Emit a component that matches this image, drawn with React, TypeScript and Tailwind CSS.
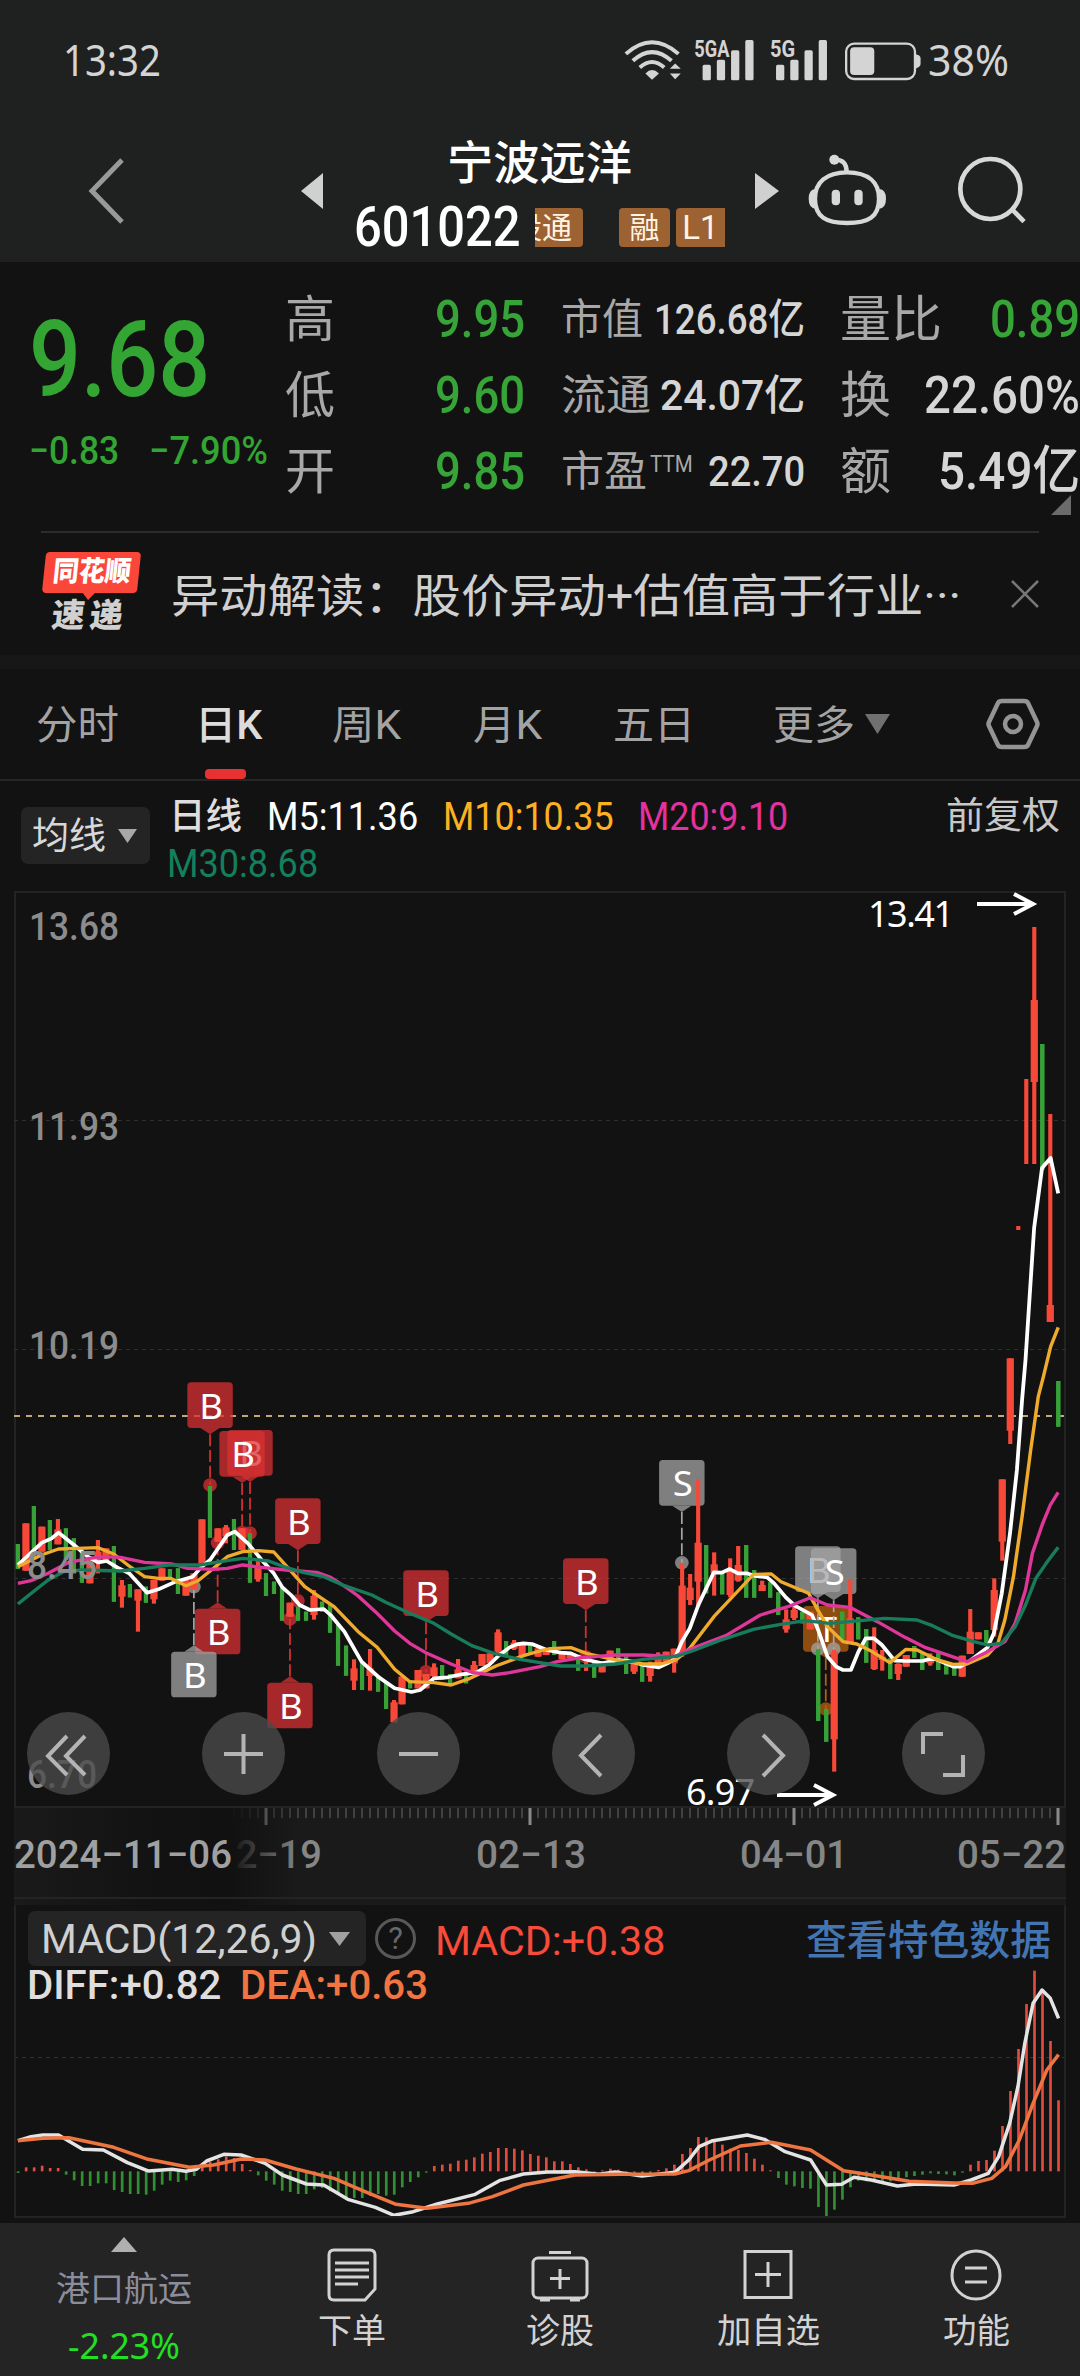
import { useLayoutEffect, useRef, useState } from "react";
import type { ReactNode } from "react";

const DIN = "font-['Roboto','Noto_Sans_CJK_SC',sans-serif]";
const UI = "font-['Noto_Sans','Noto_Sans_CJK_SC',sans-serif]";

// Squeezes a line of text to a fixed width, the way the condensed quote font does
function Fit({ w, className = "", children }: { w: number; className?: string; children: ReactNode }) {
  const ref = useRef<HTMLSpanElement>(null);
  const [scale, setScale] = useState(1);
  useLayoutEffect(() => {
    if (ref.current) setScale(w / ref.current.offsetWidth);
  }, [w, children]);
  return (
    <span className={`block shrink-0 whitespace-nowrap leading-none ${className}`} style={{ width: w }}>
      <span ref={ref} className="inline-block w-max origin-left" style={{ transform: `scaleX(${scale})` }}>
        {children}
      </span>
    </span>
  );
}

function Triangle({ className = "" }: { className?: string }) {
  return (
    <svg viewBox="0 0 20 14" preserveAspectRatio="none" className={`shrink-0 ${className}`} fill="currentColor">
      <path d="M0 0H20L10 14Z" />
    </svg>
  );
}

function StatusBar() {
  return (
    <div className={`flex h-[118px] items-center pl-[63px] text-[#d4d4d4] ${UI}`}>
      <Fit w={98} className="text-[43px]">13:32</Fit>
      <svg viewBox="60 50 960 130" className="ml-[460px] h-[43px] w-[320px] shrink-0 overflow-visible" fill="currentColor">
        <g fill="none" stroke="currentColor" strokeWidth="12">
          <path d="M71 98Q150 28 230 98" />
          <path d="M92 119Q150 66 209 119" />
          <path d="M113 139Q150 106 187 139" />
        </g>
        <path d="M130 157Q150 136 171 157L150 176Z" />
        <path d="M204 143L220 127L237 143ZM204 157H237L220 175Z" />
        <text x="278" y="106" fontSize="73" fontWeight="700" fontFamily="Roboto" textLength="106" lengthAdjust="spacingAndGlyphs">5GA</text>
        <rect x="303" y="131" width="25" height="47" rx="5" />
        <rect x="346" y="116" width="25" height="62" rx="5" />
        <rect x="389" y="87" width="25" height="91" rx="5" />
        <rect x="432" y="56" width="25" height="122" rx="5" />
        <text x="507" y="106" fontSize="73" fontWeight="700" fontFamily="Roboto" textLength="76" lengthAdjust="spacingAndGlyphs">5G</text>
        <rect x="525" y="131" width="25" height="47" rx="5" />
        <rect x="568" y="116" width="25" height="62" rx="5" />
        <rect x="611" y="87" width="25" height="91" rx="5" />
        <rect x="654" y="56" width="25" height="122" rx="5" />
        <rect x="737" y="67" width="208" height="107" rx="24" fill="none" stroke="currentColor" strokeWidth="7" />
        <rect x="749" y="78" width="73" height="84" rx="12" />
        <path d="M948 99Q962 102 962 112V128Q962 138 948 142Z" />
      </svg>
      <Fit w={81} className="-ml-[13px] text-[43px]">38%</Fit>
    </div>
  );
}

function NavBar() {
  return (
    <div className="flex h-[144px] items-start pl-[88px]">
      <svg viewBox="0 0 38 66" className="mt-[40px] h-[66px] w-[38px]" fill="none" stroke="#999" strokeWidth="5">
        <path d="M34 2L4 33L34 64" />
      </svg>
      <svg viewBox="0 0 22 36" className="mt-[55px] ml-[175px] h-[36px] w-[22px]" fill="#d0d0d0">
        <path d="M22 0V36L0 18Z" />
      </svg>
      <div className="ml-[31px] w-[371px] text-white">
        <div className="flex h-[90px] items-center pl-[93px]">
          <Fit w={185} className={`text-[46px] font-medium ${DIN}`}>宁波远洋</Fit>
        </div>
        <div className="flex h-[38px] items-center">
          <Fit w={167} className={`text-[55px] font-medium ${DIN}`}>601022</Fit>
          <div className={`ml-[14px] flex h-[39px] w-[190px] justify-end overflow-hidden text-[30px] leading-[39px] text-[#fff4e4] ${DIN}`}>
            <span className="shrink-0 rounded-[4px] bg-[#9d6232] px-[11px] whitespace-nowrap">沪股通</span>
            <span className="ml-[36px] w-[51px] shrink-0 rounded-[4px] bg-[#9d6232] text-center">融</span>
            <span className="ml-[6px] w-[49px] shrink-0 rounded-l-[4px] bg-[#9d6232] text-center text-[33px]">L1</span>
          </div>
        </div>
      </div>
      <svg viewBox="0 0 24 36" className="mt-[55px] ml-[30px] h-[36px] w-[24px]" fill="#d0d0d0">
        <path d="M0 0V36L24 18Z" />
      </svg>
      <svg viewBox="622 398 243 222" className="mt-[35px] ml-[28px] h-[74px] w-[81px]" fill="none" stroke="#d8d8d8" strokeWidth="13">
        <path d="M742 456C806 456 838 486 838 535C838 590 806 608 742 608C680 608 646 590 646 535C646 486 680 456 742 456Z" />
        <path d="M741 455C741 432 731 418 707 418" />
        <circle cx="704" cy="418" r="15" fill="#d8d8d8" stroke="none" />
        <path d="M647 506Q627 508 627 535Q627 562 647 565ZM839 506Q859 508 859 535Q859 562 839 565Z" fill="#d8d8d8" stroke="none" />
        <rect x="696" y="508" width="25" height="47" rx="12" fill="#d8d8d8" stroke="none" />
        <rect x="764" y="508" width="25" height="47" rx="12" fill="#d8d8d8" stroke="none" />
      </svg>
      <svg viewBox="1070 406 210 210" className="mt-[37px] ml-[69px] h-[70px] w-[70px]" fill="none" stroke="#d8d8d8" strokeWidth="14">
        <circle cx="1170" cy="508" r="90" />
        <path d="M1236 570L1271 606" />
      </svg>
    </div>
  );
}

function Quote() {
  const up = "text-[#37a437]";
  const flat = "text-[#d6d6d6]";
  const rows = [
    { a: "高", av: "9.95", b: "市值", bw: 82, bv: "126.68亿", bvw: 151, c: "量比", cw: 102, cv: "0.89", cvw: 90, cc: up },
    { a: "低", av: "9.60", b: "流通", bw: 90, bv: "24.07亿", bvw: 145, c: "换", cw: 51, cv: "22.60%", cvw: 156, cc: flat },
    { a: "开", av: "9.85", b: "市盈", bw: 86, bv: "22.70", bvw: 97, c: "额", cw: 51, cv: "5.49亿", cvw: 142, cc: flat },
  ];
  return (
    <section className={`relative flex h-[269px] pt-[20px] pl-[29px] ${DIN}`}>
      <div className="w-[256px] shrink-0 pt-[25px] text-[#33a532]">
        <Fit w={181} className="text-[106px] font-medium">9.68</Fit>
        <div className="mt-[19px] flex">
          <Fit w={90} className="text-[39px] font-medium">−0.83</Fit>
          <Fit w={119} className="ml-[30px] text-[39px] font-medium">−7.90%</Fit>
        </div>
      </div>
      <div>
        {rows.map((r) => (
          <div key={r.a} className="flex h-[76px] w-[795px] items-center text-[50px] text-[#a8a8a8]">
            <Fit w={50}>{r.a}</Fit>
            <Fit w={90} className="ml-[100px] text-[52px] font-medium text-[#37a437]">{r.av}</Fit>
            <div className="ml-[36px] flex w-[244px] items-center justify-between text-[42px]">
              <Fit w={r.bw}>{r.b}</Fit>
              {r.b === "市盈" && <Fit w={43} className="-ml-[12px] self-start pt-[2px] text-[23px]">TTM</Fit>}
              <Fit w={r.bvw} className="text-[42px] font-medium text-[#d6d6d6]">{r.bv}</Fit>
            </div>
            <Fit w={r.cw} className="ml-[35px]">{r.c}</Fit>
            <Fit w={r.cvw} className={`ml-auto text-[52px] font-medium ${r.cc}`}>{r.cv}</Fit>
          </div>
        ))}
      </div>
      <svg viewBox="0 0 20 20" className="absolute right-[9px] bottom-[16px] h-[20px] w-[20px]" fill="#6b6b6b">
        <path d="M20 0V20H0Z" />
      </svg>
    </section>
  );
}

function News() {
  return (
    <section className={`mx-[41px] flex h-[124px] border-t-2 border-[#2c2c2c] ${DIN}`}>
      <div className="w-[101px] shrink-0 pt-[19px] pl-[3px]">
        <div className="relative h-[41px] w-[95px] -skew-x-6 rounded-[4px] bg-[#fb4739] pt-[6px] pl-[9px]">
          <Fit w={78} className="text-[28px] font-black text-white">同花顺</Fit>
          <Triangle className="absolute top-[40px] left-[40px] h-[8px] w-[14px] text-[#fb4739]" />
        </div>
        <div className="mt-[6px] ml-[8px] flex -skew-x-6 gap-[5px] text-[33px] font-black text-[#d0d0d0]">
          <Fit w={33}>速</Fit>
          <Fit w={33}>递</Fit>
        </div>
      </div>
      <Fit w={790} className="mt-[40px] ml-[29px] text-[46px] text-[#d0d0d0]">异动解读：股价异动+估值高于行业···</Fit>
      <svg viewBox="0 0 28 28" className="mt-[47px] ml-[50px] h-[28px] w-[28px] shrink-0" stroke="#777" strokeWidth="2.5">
        <path d="M1 1L27 27M27 1L1 27" />
      </svg>
    </section>
  );
}

function Tabs() {
  return (
    <nav className={`flex h-[112px] items-center border-b-2 border-[#272727] pl-[36px] text-[40px] text-[#a3a3a3] ${DIN}`}>
      <Fit w={83} className="pt-[3px]">分时</Fit>
      <div className="relative ml-[76px] text-[#dcdcdc]">
        <Fit w={67} className="pt-[3px] font-medium">日K</Fit>
        <span className="absolute top-[66px] left-[10px] h-[10px] w-[41px] rounded-[4px] bg-[#e83131]" />
      </div>
      <Fit w={69} className="ml-[70px] pt-[3px]">周K</Fit>
      <Fit w={69} className="ml-[72px] pt-[3px]">月K</Fit>
      <Fit w={82} className="ml-[71px] pt-[3px]">五日</Fit>
      <Fit w={82} className="ml-[78px] pt-[3px]">更多</Fit>
      <Triangle className="ml-[10px] h-[20px] w-[25px] text-[#707070]" />
      <svg viewBox="0 0 54 52" className="ml-[96px] h-[52px] w-[54px]" fill="none" stroke="#949494" strokeWidth="4.5" strokeLinejoin="round">
        <path d="M16 3H38Q41 3 42 5L51 24Q52 26 51 28L42 47Q41 49 38 49H16Q13 49 12 47L3 28Q2 26 3 24L12 5Q13 3 16 3Z" />
        <circle cx="27" cy="26" r="8" />
      </svg>
    </nav>
  );
}

function Averages() {
  return (
    <div className={`flex h-[110px] pl-[21px] text-[38px] ${DIN}`}>
      <div className="mt-[26px] flex h-[57px] w-[129px] shrink-0 items-center rounded-[7px] bg-[#242424] pl-[11px] text-[#d8d8d8]">
        <Fit w={74} className="pt-[2px] text-[37px]">均线</Fit>
        <Triangle className="ml-[12px] h-[14px] w-[19px] text-[#a8a8a8]" />
      </div>
      <div className="ml-[17px] w-[755px] pt-[17px]">
        <div className="flex">
          <Fit w={73} className="ml-[2px] pt-[1px] text-[36px] font-medium text-[#dedede]">日线</Fit>
          <Fit w={151} className="ml-[25px] text-white">M5:11.36</Fit>
          <Fit w={171} className="ml-[25px] text-[#fdb022]">M10:10.35</Fit>
          <Fit w={150} className="ml-[24px] text-[#e3329f]">M20:9.10</Fit>
        </div>
        <Fit w={151} className="mt-[9px] text-[#12805c]">M30:8.68</Fit>
      </div>
      <Fit w={114} className="mt-[17px] ml-[24px] text-[37px] text-[#c8c8c8]">前复权</Fit>
    </div>
  );
}

// index, colour, high, low, then body top and bottom when they differ
type Candle = [number, "r" | "g", number, number, number?, number?];
const CANDLES: Candle[] = [
  [0, "g", 552, 627], [1, "r", 490, 632], [2, "g", 438, 590], [3, "r", 500, 575], [4, "g", 480, 570],
  [5, "r", 477, 553, 508, 553], [6, "g", 505, 600], [7, "g", 535, 640], [8, "g", 570, 668], [9, "r", 590, 670],
  [10, "r", 540, 640, 575, 610], [11, "r", 565, 600], [12, "g", 558, 725], [13, "r", 660, 743, 676, 710],
  [14, "g", 672, 712], [15, "r", 688, 815, 688, 722], [16, "g", 680, 728], [17, "r", 660, 731, 660, 718],
  [18, "r", 625, 662], [19, "g", 627, 655], [20, "g", 625, 702], [21, "r", 660, 707], [22, "r", 640, 690],
  [23, "r", 478, 612], [24, "g", 378, 533], [25, "r", 505, 545], [26, "r", 495, 550, 502, 530], [27, "g", 477, 570],
  [28, "r", 505, 570], [29, "g", 520, 668], [30, "r", 603, 665, 620, 658], [31, "g", 640, 708], [32, "g", 665, 702],
  [33, "g", 682, 782], [34, "r", 728, 770], [35, "g", 740, 782], [36, "g", 755, 782], [37, "r", 690, 779, 708, 765],
  [38, "g", 725, 755], [39, "g", 735, 818], [40, "g", 795, 917], [41, "g", 857, 947], [42, "r", 898, 990, 925, 962],
  [43, "g", 905, 990], [44, "r", 867, 992, 925, 948], [45, "g", 945, 995], [46, "g", 965, 1047],
  [47, "r", 1020, 1087, 1027, 1087], [48, "r", 950, 1033], [49, "g", 960, 985], [50, "r", 930, 985], [51, "r", 942, 985],
  [52, "r", 910, 960, 922, 948], [53, "g", 915, 960], [54, "g", 942, 978], [55, "r", 897, 955, 928, 955],
  [56, "g", 935, 970], [57, "r", 903, 940, 915, 935], [58, "r", 882, 918], [59, "r", 880, 910],
  [60, "r", 808, 885, 817, 875], [61, "g", 843, 885], [62, "r", 840, 870, 848, 866], [63, "r", 855, 890],
  [64, "g", 855, 885], [65, "r", 865, 890], [66, "r", 868, 885], [67, "g", 843, 885], [68, "r", 878, 898],
  [69, "r", 880, 895], [70, "g", 885, 932], [71, "r", 893, 933, 895, 900], [72, "g", 900, 953], [73, "r", 903, 937],
  [74, "r", 872, 905], [75, "g", 865, 900], [76, "g", 890, 942], [77, "r", 900, 942, 912, 935], [78, "g", 912, 965],
  [79, "r", 905, 965, 912, 948], [80, "r", 877, 918, 895, 910], [81, "r", 875, 905], [82, "r", 866, 938, 866, 910],
  [83, "r", 610, 890, 677, 885], [84, "r", 642, 735, 683, 720], [85, "r", 357, 740, 548, 665], [86, "g", 555, 700],
  [87, "r", 577, 707, 613, 640], [88, "g", 635, 703], [89, "r", 595, 712, 630, 705], [90, "r", 558, 665, 615, 662],
  [91, "g", 555, 713], [92, "g", 630, 713], [93, "r", 662, 693, 675, 693], [94, "g", 667, 713], [95, "g", 697, 765],
  [96, "r", 748, 818, 778, 808], [97, "r", 740, 780, 750, 774], [98, "g", 755, 790], [99, "r", 755, 808],
  [100, "g", 868, 1083], [101, "g", 1047, 1145], [102, "r", 870, 1235, 877, 1138], [103, "g", 755, 840],
  [104, "r", 657, 852, 775, 852], [105, "g", 772, 838], [106, "g", 807, 908], [107, "r", 802, 930, 870, 927],
  [108, "r", 870, 932, 890, 900], [109, "g", 895, 957], [110, "r", 910, 960, 912, 942], [111, "r", 885, 920],
  [112, "g", 858, 893], [113, "g", 880, 930], [114, "r", 880, 917, 890, 910], [115, "g", 880, 930], [116, "g", 905, 943],
  [117, "g", 912, 947], [118, "r", 887, 950], [119, "r", 747, 882, 815, 882], [120, "r", 817, 838], [121, "g", 810, 850],
  [122, "r", 655, 830, 690, 810], [123, "r", 358, 602, 358, 545], [124, "r", -5, 252, -5, 212],
  [125, "r", -402, -390, -396, -396], [126, "r", -843, -588, -700, -700], [127, "r", -1299, -588, -1080, -834],
  [128, "g", -948, -570], [129, "r", -738, -114, -165, -114], [130, "g", 63, 200],
];

const MA5 =
  "52,615 122,548 150,535 170,518 215,555 255,590 285,607 310,603 340,622 375,640 427,698 460,688 510,665 560,650 586,620 610,600 640,555 660,525 682,515 720,550 760,600 795,640 820,682 845,705 870,735 900,750 940,747 960,765 1000,815 1050,905 1098,950 1146,985 1170,990 1195,996 1220,990 1260,955 1300,952 1340,943 1385,937 1420,915 1450,885 1480,862 1500,853 1520,850 1545,852 1588,870 1628,878 1658,880 1698,898 1748,910 1798,900 1838,905 1868,915 1913,922 1938,910 1958,898 1980,845 2003,805 2028,735 2073,637 2096,638 2119,627 2143,640 2168,640 2193,648 2228,652 2248,670 2282,712 2308,737 2358,765 2376,810 2403,890 2428,920 2448,930 2471,930 2493,875 2514,835 2538,835 2561,855 2598,902 2628,903 2678,903 2700,897 2718,898 2768,920 2788,920 2813,905 2868,862 2886,820 2909,700 2933,520 2953,330 2968,120 2978,0 3003,-396 3026,-576 3051,-606 3073,-500";
const MA10 =
  "52,620 120,585 170,567 225,565 285,563 330,582 375,618 420,650 460,655 495,655 540,677 575,662 620,625 660,590 705,575 750,572 795,576 835,622 885,680 930,712 970,740 1040,815 1095,862 1146,928 1190,965 1260,968 1310,975 1365,955 1440,918 1520,887 1568,873 1598,866 1658,863 1708,882 1788,900 1868,912 1918,912 1963,900 2003,865 2073,770 2143,693 2188,643 2240,642 2268,665 2348,700 2376,752 2403,800 2448,845 2488,852 2528,872 2584,908 2631,868 2663,870 2718,898 2768,913 2808,912 2868,885 2898,850 2918,780 2943,650 2968,470 2993,270 3015,110 3030,50 3051,-40 3073,-98";
const MA20 =
  "52,670 90,662 140,640 200,607 260,595 305,590 350,592 420,607 500,612 545,625 620,628 660,625 705,615 760,622 830,630 920,637 960,652 1010,685 1040,708 1090,755 1146,813 1190,850 1240,880 1310,912 1370,937 1430,945 1480,938 1568,920 1618,905 1688,893 1788,885 1868,885 1958,890 2003,868 2108,827 2208,765 2288,740 2353,713 2403,735 2468,742 2548,785 2628,832 2688,863 2808,905 2868,875 2918,845 2948,790 2978,690 2998,580 3028,490 3050,435 3073,397";
const MA30 =
  "52,732 100,692 140,660 185,635 240,630 350,633 420,625 490,615 580,615 640,605 705,595 780,603 830,622 880,637 940,650 1000,677 1080,705 1120,727 1190,760 1260,790 1310,822 1370,857 1440,882 1510,898 1568,908 1628,918 1698,918 1788,912 1868,898 1968,888 2018,870 2088,842 2188,808 2268,793 2338,782 2408,790 2468,785 2568,775 2663,780 2708,797 2768,827 2828,845 2868,855 2908,850 2948,800 2978,735 3008,655 3038,610 3073,562";

// Trade marks: letter, x, top of the tag, y of the dot
const MARKS = [
  { t: "B", x: 610, y: 67, dot: 375, fill: "#d93032" },
  { t: "B", x: 726, y: 210, dot: 519, fill: "#d93032" },
  { t: "B", x: 703, y: 213, dot: 517, fill: "#d93032" },
  { t: "B", x: 865, y: 415, dot: 722, fill: "#d93032" },
  { t: "B", x: 1237, y: 631, dot: 935, fill: "#d93032" },
  { t: "B", x: 632, y: 746, dot: 548, fill: "#d93032" },
  { t: "B", x: 842, y: 968, dot: 777, fill: "#d93032" },
  { t: "B", x: 563, y: 875, dot: 680, fill: "#a4a4a4" },
  { t: "B", x: 1701, y: 595, dot: 890, fill: "#d93032" },
  { t: "S", x: 1980, y: 300, dot: 608, fill: "#a4a4a4" },
  { t: "T", x: 2398, y: 738, dot: 1047, fill: "#b8600f" },
  { t: "B", x: 2375, y: 559, dot: 867, fill: "#a4a4a4" },
  { t: "S", x: 2421, y: 565, dot: 867, fill: "#a4a4a4" },
];

const RED = "#f84838";
const GREEN = "#37a037";

function Mark({ t, x, y, dot, fill }: (typeof MARKS)[number]) {
  const up = dot < y;
  const edge = up ? y : y + 137;
  const tip = up ? y - 19 : y + 156;
  return (
    <g>
      <g fill={fill} opacity={0.75}>
        <rect x={x - 66} y={y} width={132} height={137} rx={11} />
        <path d={`M${x - 28} ${edge}L${x} ${tip}L${x + 28} ${edge}Z`} />
        <circle cx={x} cy={dot} r={20} />
      </g>
      <line x1={x} x2={x} y1={tip} y2={dot} stroke={fill} strokeWidth={5} strokeDasharray="36 11" />
      <text x={x + 3} y={y + 109} textAnchor="middle" fill="#fff" fontSize={106} fontFamily="Noto Sans">{t}</text>
    </g>
  );
}

function PriceLabel({ x, y, w, children }: { x: number; y: number; w: number; children: string }) {
  return (
    <text x={x} y={y} fill="#8c8c8c" fontSize="39" fontWeight="500" fontFamily="Roboto" textLength={w} lengthAdjust="spacingAndGlyphs">
      {children}
    </text>
  );
}

function CandleChart() {
  return (
    <svg viewBox="0 891 1080 917" className="block h-[917px] w-[1080px]" fill="none">
      <rect x="15" y="892" width="1050" height="915" stroke="#232323" strokeWidth="2" />
      <g stroke="#303030" strokeWidth="1" strokeDasharray="4 4">
        <path d="M14 1120.5H1066M14 1349.5H1066M14 1578.5H1066" />
      </g>
      <path d="M14 1416H1066" stroke="#c6a876" strokeWidth="2" strokeDasharray="6 6" />
      <g transform="translate(0 1360) scale(0.34436 0.33333)">
        {MARKS.map((m) => (
          <Mark key={`${m.x}`} {...m} />
        ))}
        {CANDLES.map(([i, c, high, low, top = high, bottom = low]) => {
          const x = 52 + 23.24 * i;
          const half = c === "r" ? 10.5 : 6;
          return (
            <g key={i} fill={c === "r" ? RED : GREEN}>
              <rect x={x - 6} y={high} width={12} height={low - high} />
              <rect x={x - half} y={top} width={half * 2} height={bottom - top} />
            </g>
          );
        })}
        <g strokeWidth="10" strokeLinejoin="round">
          <polyline points={MA5} stroke="#ffffff" strokeWidth="11" />
          <polyline points={MA10} stroke="#f0ab2c" />
          <polyline points={MA20} stroke="#df3799" />
          <polyline points={MA30} stroke="#187c5c" />
        </g>
      </g>
      <PriceLabel x={29} y={940} w={90}>13.68</PriceLabel>
      <PriceLabel x={29} y={1140} w={90}>11.93</PriceLabel>
      <PriceLabel x={29} y={1359} w={90}>10.19</PriceLabel>
      <PriceLabel x={27} y={1579} w={70}>8.45</PriceLabel>
      <PriceLabel x={27} y={1788} w={70}>6.70</PriceLabel>
      <g fill="#fff" fontSize="36" fontFamily="Noto Sans">
        <text x="868" y="927" textLength="86">13.41</text>
        <text x="686" y="1805" textLength="69">6.97</text>
      </g>
      <g stroke="#fff" strokeWidth="4">
        <path d="M977 904H1033M1014 894L1033 904L1014 914" />
        <path d="M777 1795H833M814 1785L833 1795L814 1805" />
      </g>
    </svg>
  );
}

const CONTROLS = ["M33 24L14 44L33 63M51 24L32 44L51 63", "M22 42H61M41.5 22V62", "M22 42H61", "M49 23L29 43.500L49 64", "M36 23L56 43.500L36 64", "M21 42V22H41M61 43V63H41"];

function Controls() {
  return (
    <div className="absolute bottom-[13px] left-[27px] flex gap-[92px]">
      {CONTROLS.map((d, i) => (
        <button key={i} className="h-[83px] w-[83px] rounded-full bg-[#4a4a4a]/78">
          <svg viewBox={i === 0 ? "-7 0 83 83" : "0 0 83 83"} className="h-[83px] w-[83px]" fill="none" stroke="#b4b4b4" strokeWidth="4">
            <path d={d} />
          </svg>
        </button>
      ))}
    </div>
  );
}

function DateAxis() {
  const ticks = Array.from({ length: 104 }, (_, k) => k + 27);
  return (
    <svg viewBox="0 1808 1080 97" className="block h-[97px] w-[1080px]">
      <defs>
        <linearGradient id="fade">
          <stop offset="0" stopColor="#1a1a1a" />
          <stop offset="0.5" stopColor="#121212" />
          <stop offset="0.75" stopColor="#111" />
          <stop offset="1" stopColor="#111" stopOpacity="0" />
        </linearGradient>
      </defs>
      <rect x="14" y="1808" width="1052" height="97" fill="#1a1a1a" />
      {ticks.map((i) => {
        const major = (i - 31) % 33 === 0;
        return <rect key={i} x={major ? 16.5 + 8 * i : 17.5 + 8 * i} y="1808" width={major ? 3 : 1} height={major ? 17 : 10} fill={major ? "#8a8a8a" : "#666"} />;
      })}
      <g fill="#868686" fontSize="39" fontWeight="500" fontFamily="Roboto">
        <text x="214" y="1868" textLength="108" lengthAdjust="spacingAndGlyphs">12−19</text>
        <text x="476" y="1868" textLength="110" lengthAdjust="spacingAndGlyphs">02−13</text>
        <text x="740" y="1868" textLength="108" lengthAdjust="spacingAndGlyphs">04−01</text>
        <text x="957" y="1868" textLength="109" lengthAdjust="spacingAndGlyphs">05−22</text>
        <rect x="14" y="1808" width="286" height="97" fill="url(#fade)" />
        <text x="14" y="1868" fill="#a0a0a0" textLength="218" lengthAdjust="spacingAndGlyphs">2024−11−06</text>
      </g>
      <rect x="14" y="1897" width="1052" height="2" fill="#242424" />
    </svg>
  );
}

const BARS = [
  -5, 12, 12, 17, 10, 10, -10, -27, -44, -44, -36, -36, -56, -62, -68, -68, -70, -58, -40, -28, -32, -27, -14, 20, 28, 36, 44, 40, 22, 4,
  -12, -28, -40, -58, -62, -68, -68, -54, -50, -60, -70, -82, -80, -80, -74, -68, -73, -70, -48, -32, -18, -4, 16, 20, 23, 32, 35, 42, 53, 58,
  70, 70, 68, 63, 52, 47, 42, 30, 30, 22, 12, 6, -3, 3, 8, 5, -4, -5, -6, -5, 4, 9, 20, 52, 70, 103, 102, 92, 80, 68, 64, 55, 38, 20, 3, -20,
  -40, -45, -50, -52, -107, -137, -115, -85, -48, -28, -30, -30, -32, -30, -28, -18, -14, -10, -6, -8, -9, -12, -4, 20, 31, 34, 62, 136, 241,
  367, 502, 602, 535, 391, 213,
];
const DIFF =
  "26,542 45,530 62,525 85,525 120,568 150,570 185,608 215,633 250,628 270,634 285,628 300,603 325,583 350,585 385,610 410,645 445,672 470,675 505,718 545,742 572,766 600,755 635,732 690,703 725,662 760,642 795,636 835,635 870,643 893,636 932,648 980,637 1000,600 1015,560 1035,542 1085,525 1110,538 1140,575 1177,600 1200,675 1222,673 1240,652 1265,660 1303,678 1330,672 1385,675 1410,660 1435,640 1450,590 1466,490 1478,380 1488,250 1500,130 1513,90 1525,115 1537,175";
const DEA =
  "26,542 62,535 100,533 165,562 215,598 275,622 310,615 350,597 385,600 430,627 485,655 530,695 575,733 620,745 680,730 715,710 760,675 835,645 900,643 980,642 1000,632 1030,600 1075,558 1120,547 1177,570 1225,632 1265,645 1320,664 1385,669 1412,670 1440,655 1460,620 1480,540 1500,430 1520,330 1537,284";

function Macd() {
  return (
    <section className={`relative mx-[14px] h-[313px] border-x-2 border-b-2 border-[#232323] ${DIN}`}>
      <svg viewBox="16 1905 1048 311" className="absolute inset-0 h-[311px] w-[1048px]" fill="none">
        <path d="M14 2057.500H1066" stroke="#333" strokeDasharray="4 4" />
        <g transform="translate(0 1960) scale(0.68871 0.33333)">
          {BARS.map((v, i) => (
            <rect key={i} x={24.4 + 11.62 * i} y={v > 0 ? 634 - v : 634} width={3.9} height={Math.abs(v)} fill={v > 0 ? "#e14c3c" : "#318f30"} />
          ))}
          <polyline points={DIFF} stroke="#e4e4e4" strokeWidth="3.500" vectorEffect="non-scaling-stroke" strokeLinejoin="round" />
          <polyline points={DEA} stroke="#ee7440" strokeWidth="3.500" vectorEffect="non-scaling-stroke" strokeLinejoin="round" />
        </g>
      </svg>
      <div className="relative flex pt-[6px] pl-[12px] text-[41px]">
        <div className="flex h-[55px] w-[338px] items-center rounded-[7px] bg-[#242424] pl-[13px] text-[#d0d0d0]">
          <Fit w={276} className="pt-[2px]">MACD(12,26,9)</Fit>
          <Triangle className="ml-[12px] h-[14px] w-[21px] text-[#a0a0a0]" />
        </div>
        <span className="mt-[7px] ml-[9px] h-[41px] w-[41px] rounded-full border-[3px] border-[#585858] text-center text-[31px] leading-[36px] text-[#686868]">?</span>
        <Fit w={230} className="mt-[10px] ml-[19px] text-[#f84b3a]">MACD:+0.38</Fit>
        <Fit w={245} className="mt-[10px] ml-[141px] font-medium text-[#4275b2]">查看特色数据</Fit>
      </div>
      <div className="relative -mt-px flex pl-[11px] text-[41px]">
        <Fit w={194} className="font-medium text-[#dedede]">DIFF:+0.82</Fit>
        <Fit w={188} className="ml-[19px] font-medium text-[#f27440]">DEA:+0.63</Fit>
      </div>
    </section>
  );
}

function NavItem({ label, w, children }: { label: string; w: number; children: ReactNode }) {
  return (
    <button className="flex w-[208px] flex-col items-center pt-[24px] text-[#d2d2d2]">
      <svg viewBox="0 0 60 56" className="h-[56px] w-[60px]" fill="none" stroke="currentColor" strokeWidth="3">
        {children}
      </svg>
      <Fit w={w} className="mt-[11px] text-[34px]">{label}</Fit>
    </button>
  );
}

function BottomBar() {
  return (
    <footer className={`flex h-[153px] bg-[#242424] ${DIN}`}>
      <div className="flex w-[248px] flex-col items-center pt-[14px]">
        <Triangle className="h-[15px] w-[26px] rotate-180 text-[#b0b0b0]" />
        <Fit w={136} className="mt-[20px] text-[34px] text-[#8b8d9c]">港口航运</Fit>
        <Fit w={112} className={`mt-[22px] text-[36px] text-[#22e022] ${UI}`}>-2.23%</Fit>
      </div>
      <NavItem label="下单" w={68}>
        <path d="M12 3H48Q53 3 53 8V42L43 53H12Q7 53 7 48V8Q7 3 12 3Z" />
        <path d="M13 16H47M13 23H47M13 30H47M13 37H36" />
      </NavItem>
      <NavItem label="诊股" w={68}>
        <rect x="3" y="11" width="54" height="40" rx="5" />
        <path d="M19 5.500H41M30 22V42M20 31.500H40M10 53H20M40 53H50" />
      </NavItem>
      <NavItem label="加自选" w={103}>
        <rect x="7" y="4.500" width="46" height="46" />
        <path d="M30 15V40M17 27.500H43" />
      </NavItem>
      <NavItem label="功能" w={67}>
        <circle cx="30" cy="28" r="24" />
        <path d="M19 21H41M19 35H41" />
      </NavItem>
    </footer>
  );
}

export default function App() {
  return (
    <main className="h-[2376px] w-[1080px] overflow-hidden bg-[#121212]">
      <header className="bg-[#1f2120]">
        <StatusBar />
        <NavBar />
      </header>
      <Quote />
      <News />
      <div className="h-[14px] bg-[#171717]" />
      <Tabs />
      <Averages />
      <div className="relative">
        <CandleChart />
        <Controls />
      </div>
      <DateAxis />
      <Macd />
      <div className="h-[5px]" />
      <BottomBar />
    </main>
  );
}
